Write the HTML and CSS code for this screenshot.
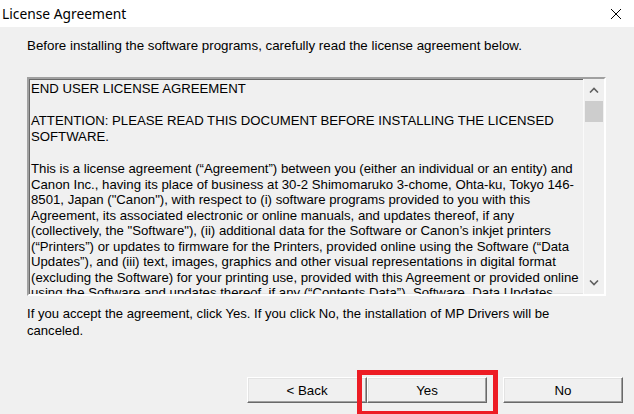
FILE: index.html
```html
<!DOCTYPE html>
<html lang="en">
<head>
<meta charset="UTF-8" />
<title>License Agreement</title>
<link rel="stylesheet" href="styles.css">
</head>
<body>
    <div class="dialog">
        <div class="titlebar">
            <span class="title">License Agreement</span>
            <svg class="close" width="12" height="12" viewBox="0 0 12 12">
                <path d="M1 1 L11 11 M11 1 L1 11" stroke="#000" stroke-width="1" fill="none"/>
            </svg>
        </div>

        <div class="content">
            <p class="intro">Before installing the software programs, carefully read the license agreement below.</p>

            <div class="eula">
                <div class="eula-text">
                    <p class="head">END USER LICENSE AGREEMENT</p>
                    <p class="head">ATTENTION: PLEASE READ THIS DOCUMENT BEFORE INSTALLING THE LICENSED<br>SOFTWARE.</p>
                    <p class="body">This is a license agreement (“Agreement”) between you (either an individual or an entity) and<br>Canon Inc., having its place of business at 30-2 Shimomaruko 3-chome, Ohta-ku, Tokyo 146-<br>8501, Japan ("Canon"), with respect to (i) software programs provided to you with this<br>Agreement, its associated electronic or online manuals, and updates thereof, if any<br>(collectively, the "Software"), (ii) additional data for the Software or Canon’s inkjet printers<br>(“Printers”) or updates to firmware for the Printers, provided online using the Software (“Data<br>Updates”), and (iii) text, images, graphics and other visual representations in digital format<br>(excluding the Software) for your printing use, provided with this Agreement or provided online<br>using the Software and updates thereof, if any (“Contents Data”), Software, Data Updates</p>
                </div>
                <div class="scrollbar">
                    <div class="arrow">
                        <svg width="10" height="6" viewBox="0 0 10 6"><path d="M1 5.5 L5 1.5 L9 5.5" stroke="#606060" stroke-width="1.6" fill="none"/></svg>
                    </div>
                    <div class="thumb"></div>
                    <div class="track"></div>
                    <div class="arrow">
                        <svg width="10" height="6" viewBox="0 0 10 6"><path d="M1 0.5 L5 4.5 L9 0.5" stroke="#606060" stroke-width="1.6" fill="none"/></svg>
                    </div>
                </div>
            </div>

            <p class="note">If you accept the agreement, click Yes. If you click No, the installation of MP Drivers will be<br>canceled.</p>

            <div class="buttons">
                <button class="btn">&lt; Back</button>
                <button class="btn btn-yes">Yes<span class="highlight"></span></button>
                <button class="btn btn-no">No</button>
            </div>
        </div>
    </div>
</body>
</html>
```

FILE: styles.css
```css
body, html {
    margin: 0;
    padding: 0;
    height: 100%;
    overflow: hidden;
    background: #f0f0f0;
}

.dialog {
    width: 634px;
    height: 414px;
    display: flex;
    flex-direction: column;
    font-family: "Liberation Sans", Arial, sans-serif;
    font-size: 13.2px;
    color: #000;
}

.titlebar {
    height: 27px;
    background: #fff;
    display: flex;
    align-items: center;
    justify-content: space-between;
    padding: 0 12px 0 2px;
}

.title {
    font-family: "Noto Sans", sans-serif;
    font-size: 13.8px;
    color: #000;
}

.close {
    display: block;
}

.content {
    flex: 1;
    padding: 0 11px 0 27px;
    display: flex;
    flex-direction: column;
}

p {
    margin: 0;
}

.intro {
    margin-top: 11px;
    line-height: 16px;
    font-size: 13.33px;
}

/* kotak lisensi, tepi cekung ala windows klasik */
.eula {
    margin-top: 23px;
    height: 215px;
    display: flex;
    border: 2px solid;
    border-color: #a0a0a0 #fff #fff #a0a0a0;
    box-shadow: inset 1px 1px #696969, inset -1px -1px #e3e3e3;
    margin-right: 17px;
}

.eula-text {
    flex: 1;
    overflow: hidden;
    padding: 2px 0 0 2px;
    white-space: nowrap;
}

.eula-text .head {
    line-height: 16px;
    margin-bottom: 16px;
}

.eula-text .body {
    line-height: 15.5px;
}

.scrollbar {
    width: 20px;
    border-left: 1px solid #fafafa;
    display: flex;
    flex-direction: column;
    background: #f0f0f0;
}

.arrow {
    height: 22px;
    display: flex;
    align-items: center;
    justify-content: center;
}

.thumb {
    height: 21px;
    margin: 0 1px 0 1px;
    background: #cdcdcd;
}

.track {
    flex: 1;
}

.note {
    margin-top: 10px;
    line-height: 16.5px;
    font-size: 13.1px;
}

.buttons {
    margin-top: 38px;
    display: flex;
    justify-content: flex-end;
}

.btn {
    position: relative;
    width: 120px;
    height: 26px;
    font-family: "Liberation Sans", Arial, sans-serif;
    font-size: 13.33px;
    color: #000;
    background: #f0f0f0;
    border: 1px solid;
    border-color: #fff #696969 #696969 #fff;
    box-shadow: inset -1px -1px #a0a0a0, inset 1px 1px #e3e3e3;
    padding: 0;
}

.btn-no {
    margin-left: 16px;
}

/* kotak merah penanda tombol Yes */
.highlight {
    position: absolute;
    left: -11px;
    top: -8px;
    width: 141px;
    height: 46px;
    box-sizing: border-box;
    border: 5px solid #ed1c24;
}
```
